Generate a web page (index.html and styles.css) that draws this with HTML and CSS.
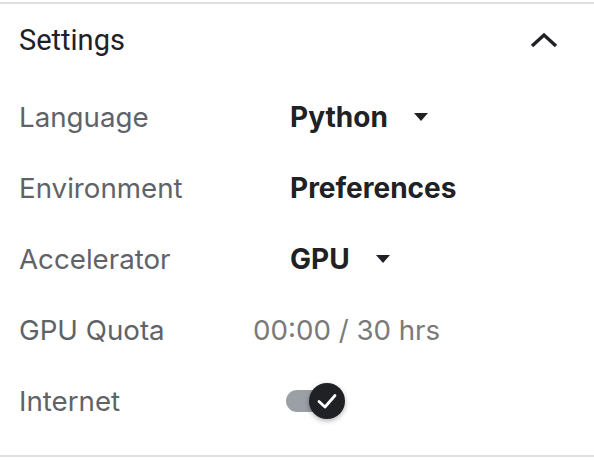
FILE: index.html
```html
<!DOCTYPE html>
<html>
<head>
<meta charset="utf-8">
<link rel="stylesheet" href="styles.css">
</head>
<body>
<section class="panel">
  <header class="panel-head">
    <h2 class="title">Settings</h2>
    <svg class="chevron" width="28" height="16" viewBox="0 0 28 16"><path d="M2 14 L14 3 L26 14" fill="none" stroke="#202124" stroke-width="3.4"/></svg>
  </header>
  <div class="rows">
    <div class="row">
      <span class="label">Language</span>
      <span class="value select">Python <span class="caret"></span></span>
    </div>
    <div class="row">
      <span class="label">Environment</span>
      <span class="value">Preferences</span>
    </div>
    <div class="row">
      <span class="label">Accelerator</span>
      <span class="value select">GPU <span class="caret"></span></span>
    </div>
    <div class="row">
      <span class="label">GPU Quota</span>
      <span class="quota">00:00 / 30 hrs</span>
    </div>
    <div class="row">
      <span class="label">Internet</span>
      <span class="toggle">
        <span class="track"></span>
        <span class="thumb"><svg width="24" height="24" viewBox="0 0 24 24"><path d="M4 12.5 L10 18 L20 6.5" fill="none" stroke="#fff" stroke-width="2.8" stroke-linecap="round" stroke-linejoin="round"/></svg></span>
      </span>
    </div>
  </div>
</section>
</body>
</html>
```
FILE: styles.css
```css
html, body {
  margin: 0;
  padding: 0;
  background: #fff;
}
.panel {
  margin-top: 2px;
  border-top: 2px solid #e0e0e0;
  border-bottom: 2px solid #e0e0e0;
  padding-bottom: 19px;
}
.panel-head {
  height: 72px;
  display: flex;
  align-items: center;
  justify-content: space-between;
  padding: 0 36px 0 19px;
  margin-bottom: 5px;
}
.title {
  margin: 0;
  font-family: Roboto, sans-serif;
  font-weight: 400;
  font-size: 29px;
  color: #202124;
}
.chevron {
  display: block;
}
.rows {
  display: flex;
  flex-direction: column;
}
.row {
  height: 71px;
  display: grid;
  grid-template-columns: 234px 1fr;
  align-items: center;
  padding-left: 19px;
}
.label {
  font-family: Inter, sans-serif;
  font-size: 27.7px;
  color: #5f6368;
}
.value {
  padding-left: 37px;
  font-family: Inter, sans-serif;
  font-weight: 700;
  font-size: 28px;
  color: #202124;
  display: flex;
  align-items: center;
}
.caret {
  margin-left: 26px;
  width: 0;
  height: 0;
  border-left: 7.5px solid transparent;
  border-right: 7.5px solid transparent;
  border-top: 8px solid #202124;
}
.quota {
  font-family: Inter, sans-serif;
  font-size: 27.7px;
  color: #7a7a7a;
}
.toggle {
  position: relative;
  margin-left: 33px;
  width: 64px;
  height: 40px;
  display: flex;
  align-items: center;
}
.track {
  width: 44px;
  height: 22px;
  border-radius: 11px;
  background: #9aa0a6;
}
.thumb {
  position: absolute;
  left: 23px;
  top: 2px;
  width: 36px;
  height: 36px;
  border-radius: 50%;
  background: #202124;
  box-shadow: 0 2px 5px rgba(0,0,0,0.3);
  display: flex;
  align-items: center;
  justify-content: center;
}
.thumb svg {
  display: block;
}
```
